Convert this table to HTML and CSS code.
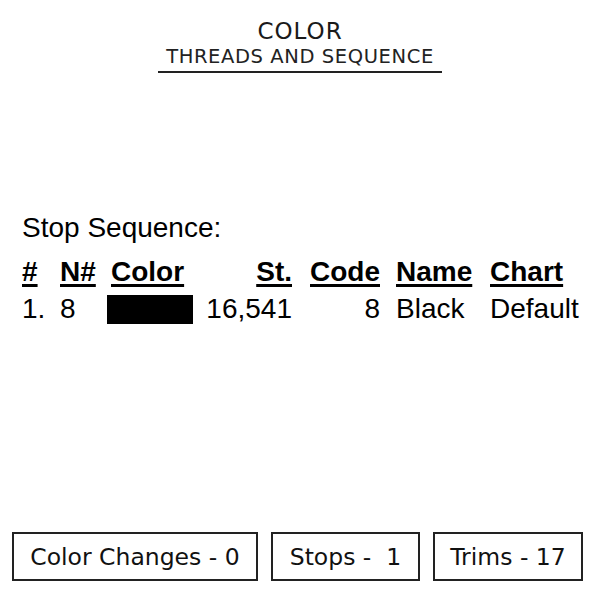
FILE: index.html
```html
<!DOCTYPE html>
<html>
<head>
<meta charset="utf-8">
<link rel="stylesheet" href="styles.css">
</head>
<body>
<div class="page">
  <header class="head">
    <div class="title">COLOR</div>
    <div class="subtitle">THREADS AND SEQUENCE</div>
  </header>
  <section class="seq">
    <div class="seq-title">Stop Sequence:</div>
    <div class="grid">
      <div class="th">#</div>
      <div class="th">N#</div>
      <div class="th th-color">Color</div>
      <div class="th right">St.</div>
      <div class="th right">Code</div>
      <div class="th pl">Name</div>
      <div class="th">Chart</div>

      <div class="td">1.</div>
      <div class="td">8</div>
      <div class="td"><span class="swatch"></span></div>
      <div class="td right">16,541</div>
      <div class="td right">8</div>
      <div class="td pl">Black</div>
      <div class="td">Default</div>
    </div>
  </section>
  <footer class="stats">
    <div class="stat s1">Color Changes - 0</div>
    <div class="stat s2">Stops -&nbsp; 1</div>
    <div class="stat s3">Trims - 17</div>
  </footer>
</div>
</body>
</html>
```
FILE: styles.css
```css
html, body {
  margin: 0;
  padding: 0;
  background: #fff;
}
.page {
  width: 600px;
  height: 600px;
  display: flex;
  flex-direction: column;
  color: #111;
}
.head {
  display: flex;
  flex-direction: column;
  align-items: center;
  padding-top: 17px;
  font-family: "DejaVu Sans", sans-serif;
}
.title {
  font-size: 23px;
  line-height: 28px;
  letter-spacing: 1px;
  color: #1a1a1a;
}
.subtitle {
  font-size: 19.5px;
  line-height: 23px;
  letter-spacing: 0.6px;
  color: #222;
  padding: 0 8px 3px;
  border-bottom: 2px solid #222;
}
.seq {
  margin-top: 139px;
  padding-left: 22px;
  font-family: "Liberation Sans", Arial, sans-serif;
  font-size: 28px;
  color: #000;
}
.seq-title {
  line-height: 32px;
  margin-bottom: 10px;
}
.grid {
  display: grid;
  grid-template-columns: 38px 47px 93px 92px 88px 110px auto;
  grid-template-rows: 36px 37px;
  line-height: 36px;
}
.td { line-height: 38px; white-space: nowrap; }
.th {
  font-weight: bold;
  text-decoration: underline;
  text-decoration-thickness: 3px;
  text-underline-offset: 3px;
}
.th-color { padding-left: 4px; }
.right { text-align: right; }
.pl { padding-left: 16px; }
.swatch {
  display: inline-block;
  width: 86px;
  height: 29px;
  background: #000;
  vertical-align: -6px;
}
.stats {
  margin-top: auto;
  margin-bottom: 19px;
  display: flex;
  padding-left: 12px;
  gap: 13px;
  font-family: "DejaVu Sans", sans-serif;
  font-size: 23.5px;
  color: #111;
}
.stat {
  box-sizing: border-box;
  height: 49px;
  border: 2px solid #222;
  display: flex;
  align-items: center;
  justify-content: center;
  white-space: nowrap;
}
.s1 { width: 246px; }
.s2 { width: 149px; }
.s3 { width: 150px; }
```
